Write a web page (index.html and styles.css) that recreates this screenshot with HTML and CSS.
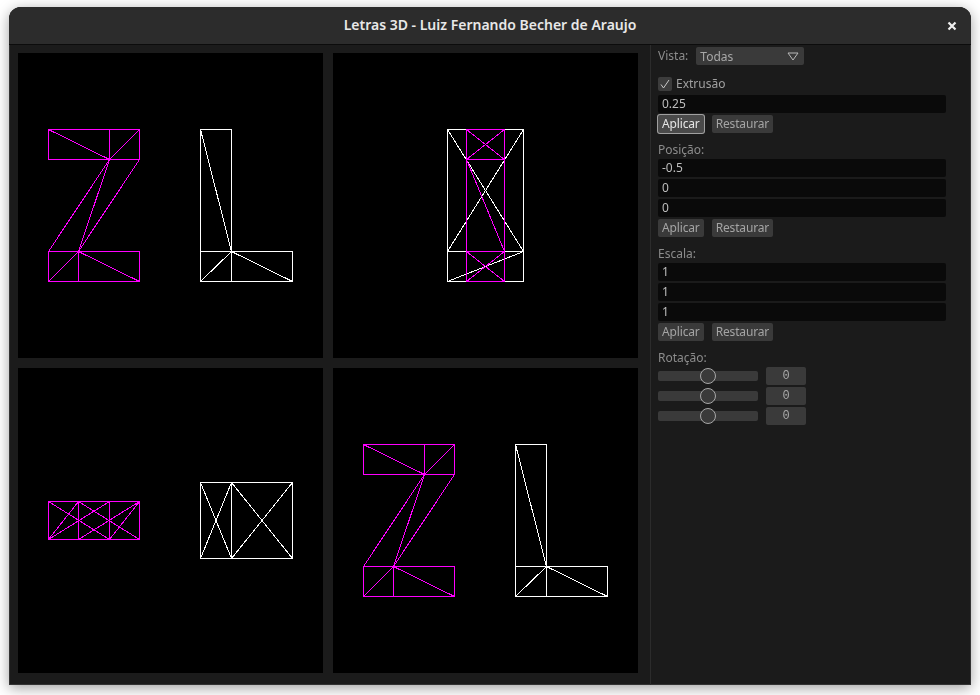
FILE: index.html
```html
<!DOCTYPE html>
<html lang="pt">
<head>
<meta charset="utf-8">
<title>Letras 3D</title>
<link rel="stylesheet" href="styles.css">
</head>
<body>
<svg class="defs" width="0" height="0" aria-hidden="true">
  <defs>
    <g id="z-front" class="magenta">
      <path d="M30.5 76.5H121.5V106.5H30.5ZM91.5 76.5V106.5M30.5 76.5L91.5 106.5M121.5 76.5L91.5 106.5"/>
      <path d="M30.5 198.5H121.5V228.5H30.5ZM60.5 198.5V228.5M30.5 228.5L60.5 198.5M60.5 198.5L121.5 228.5"/>
      <path d="M91.5 106.5L30.5 198.5M91.5 106.5L60.5 198.5M121.5 106.5L60.5 198.5"/>
    </g>
    <g id="l-front" class="white">
      <path d="M182.5 76.5H213.5V198.5H182.5ZM182.5 76.5L213.5 198.5"/>
      <path d="M182.5 198.5H274.5V228.5H182.5ZM213.5 198.5V228.5M182.5 228.5L213.5 198.5M213.5 198.5L274.5 228.5"/>
    </g>
  </defs>
</svg>
<main class="window">
  <header class="titlebar">
    <h1 class="title">Letras 3D - Luiz Fernando Becher de Araujo</h1>
    <svg class="close" width="10" height="10" viewBox="0 0 10 10"><path d="M1.5 1.5L8.5 8.5M8.5 1.5L1.5 8.5"/></svg>
  </header>
  <div class="content">
    <section class="views">
      <svg class="view" viewBox="0 0 305 305"><use href="#z-front"/><use href="#l-front"/></svg>
      <svg class="view" viewBox="0 0 305 305">
        <g class="white"><path d="M114.5 76.5H190.5V228.5H114.5ZM114.5 198.5H190.5M114.5 76.5L190.5 198.5M190.5 76.5L114.5 198.5M114.5 228.5L190.5 198.5"/></g>
        <g class="magenta"><path d="M133.5 76.5H171.5V228.5H133.5ZM133.5 106.5H171.5M133.5 198.5H171.5M133.5 76.5L171.5 106.5M171.5 76.5L133.5 106.5M133.5 106.5L171.5 198.5M133.5 198.5L171.5 228.5M171.5 198.5L133.5 228.5"/></g>
      </svg>
      <svg class="view" viewBox="0 0 305 305">
        <g class="magenta"><path d="M30.5 133.5H121.5V171.5H30.5ZM60.5 133.5V171.5M91.5 133.5V171.5M30.5 133.5L91.5 171.5M30.5 171.5L91.5 133.5M60.5 133.5L121.5 171.5M60.5 171.5L121.5 133.5M30.5 171.5L60.5 133.5M91.5 171.5L121.5 133.5"/></g>
        <g class="white"><path d="M182.5 114.5H274.5V190.5H182.5ZM213.5 114.5V190.5M182.5 114.5L213.5 190.5M213.5 114.5L182.5 190.5M213.5 114.5L274.5 190.5M274.5 114.5L213.5 190.5"/></g>
      </svg>
      <svg class="view" viewBox="0 0 305 305"><use href="#z-front"/><use href="#l-front"/></svg>
    </section>
    <aside class="side">
      <div class="row vista">
        <span class="label">Vista:</span>
        <div class="select"><span>Todas</span>
          <svg width="12" height="9" viewBox="0 0 12 9"><path d="M1 1H11L6 8Z"/></svg>
        </div>
      </div>
      <div class="group first">
        <label class="row check">
          <span class="box"><svg width="14" height="14" viewBox="0 0 14 14"><path d="M3 7.5L5.5 11L11 3"/></svg></span>
          <span class="label">Extrusão</span>
        </label>
        <div class="input">0.25</div>
        <div class="row buttons"><button class="btn focus">Aplicar</button><button class="btn">Restaurar</button></div>
      </div>
      <div class="group">
        <div class="label heading">Posição:</div>
        <div class="input">-0.5</div>
        <div class="input">0</div>
        <div class="input">0</div>
        <div class="row buttons"><button class="btn">Aplicar</button><button class="btn">Restaurar</button></div>
      </div>
      <div class="group">
        <div class="label heading">Escala:</div>
        <div class="input">1</div>
        <div class="input">1</div>
        <div class="input">1</div>
        <div class="row buttons"><button class="btn">Aplicar</button><button class="btn">Restaurar</button></div>
      </div>
      <div class="group">
        <div class="label heading">Rotação:</div>
        <div class="row slider"><div class="track"><span class="thumb"></span></div><div class="value">0</div></div>
        <div class="row slider"><div class="track"><span class="thumb"></span></div><div class="value">0</div></div>
        <div class="row slider"><div class="track"><span class="thumb"></span></div><div class="value">0</div></div>
      </div>
    </aside>
  </div>
</main>
</body>
</html>
```
FILE: styles.css
```css
* { box-sizing: border-box; }
html, body { height: 100%; }
body {
  margin: 0;
  padding: 7px 9px 10px;
  background: #fff;
  font-family: "Noto Sans", "Open Sans", sans-serif;
  font-size: 12px;
  overflow: hidden;
}
.defs { position: absolute; }
.window {
  height: 678px;
  display: flex;
  flex-direction: column;
  background: #1b1b1b;
  border-radius: 12px 12px 0 0;
  box-shadow: inset 0 0 0 1px #333, 0 3px 14px rgba(0, 0, 0, .38);
  overflow: hidden;
}
.titlebar {
  height: 38px;
  flex: none;
  display: flex;
  align-items: center;
  justify-content: center;
  position: relative;
  background: #2c2c2c;
  border-bottom: 1px solid #0c0c0c;
  padding-bottom: 2px;
}
.title {
  margin: 0;
  font-size: 14px;
  font-weight: 600;
  color: #e8e8e8;
}
.close {
  position: absolute;
  right: 14px;
  top: 14px;
  fill: none;
  stroke: #f0f0f0;
  stroke-width: 2.2;
}
.content { flex: 1; display: flex; min-height: 0; }
.views {
  width: 641px;
  flex: none;
  display: grid;
  grid-template-columns: 305px 305px;
  grid-auto-rows: 305px;
  gap: 10px;
  padding: 8px 12px 0 9px;
}
.view { display: block; width: 305px; height: 305px; background: #000; shape-rendering: crispEdges; }
.magenta, .white { fill: none; stroke-width: 1; }
.magenta { stroke: #ff00ff; }
.white { stroke: #fff; }
.side {
  flex: 1;
  border-left: 1px solid #2c2c2c;
  padding: 2px 25px 0 7px;
  display: flex;
  flex-direction: column;
  gap: 8px;
  will-change: opacity;
}
.row { display: flex; align-items: center; height: 18px; }
.label { color: #8c8c8c; line-height: 18px; }
.vista { gap: 8px; }
.select {
  width: 108px;
  height: 18px;
  background: #3a3a3a;
  border-radius: 2px;
  color: #a8a8a8;
  display: flex;
  align-items: center;
  justify-content: space-between;
  padding: 0 5px 0 4px;
}
.select svg { fill: none; stroke: #b8b8b8; stroke-width: 1; }
.group { display: flex; flex-direction: column; gap: 2px; }
.group.first { margin-top: 2px; }
.heading { margin-bottom: -2px; }
.check { gap: 4px; }
.check .label { color: #a0a0a0; }
.box {
  width: 14px;
  height: 14px;
  background: #3c3c3c;
  border-radius: 2px;
  display: block;
}
.box svg { display: block; fill: none; stroke: #c8c8c8; stroke-width: 1; }
.input {
  height: 18px;
  background: #0a0a0a;
  border-radius: 2px;
  color: #bdbdbd;
  padding: 0 4px;
  line-height: 18px;
}
.buttons { gap: 8px; }
.btn {
  height: 18px;
  padding: 0 4px;
  border: 0;
  border-radius: 2px;
  background: #3a3a3a;
  color: #a4a4a4;
  font: inherit;
  letter-spacing: -.15px;
  line-height: 18px;
}
.btn.focus {
  color: #e6e6e6;
  background: #4a4a4a;
  box-shadow: 0 0 0 1px #a0a0a0;
}
.slider { gap: 8px; }
.track {
  width: 100px;
  height: 10px;
  background: #3a3a3a;
  border-radius: 2px;
  position: relative;
}
.thumb {
  position: absolute;
  left: 42px;
  top: -3px;
  width: 16px;
  height: 16px;
  border-radius: 50%;
  background: #3a3a3a;
  border: 1.5px solid #a8a8a8;
}
.value {
  width: 40px;
  height: 18px;
  background: #3a3a3a;
  border-radius: 2px;
  color: #a8a8a8;
  text-align: center;
  line-height: 18px;
  font-family: "Liberation Mono", "DejaVu Sans Mono", monospace;
  font-size: 12px;
}
```
